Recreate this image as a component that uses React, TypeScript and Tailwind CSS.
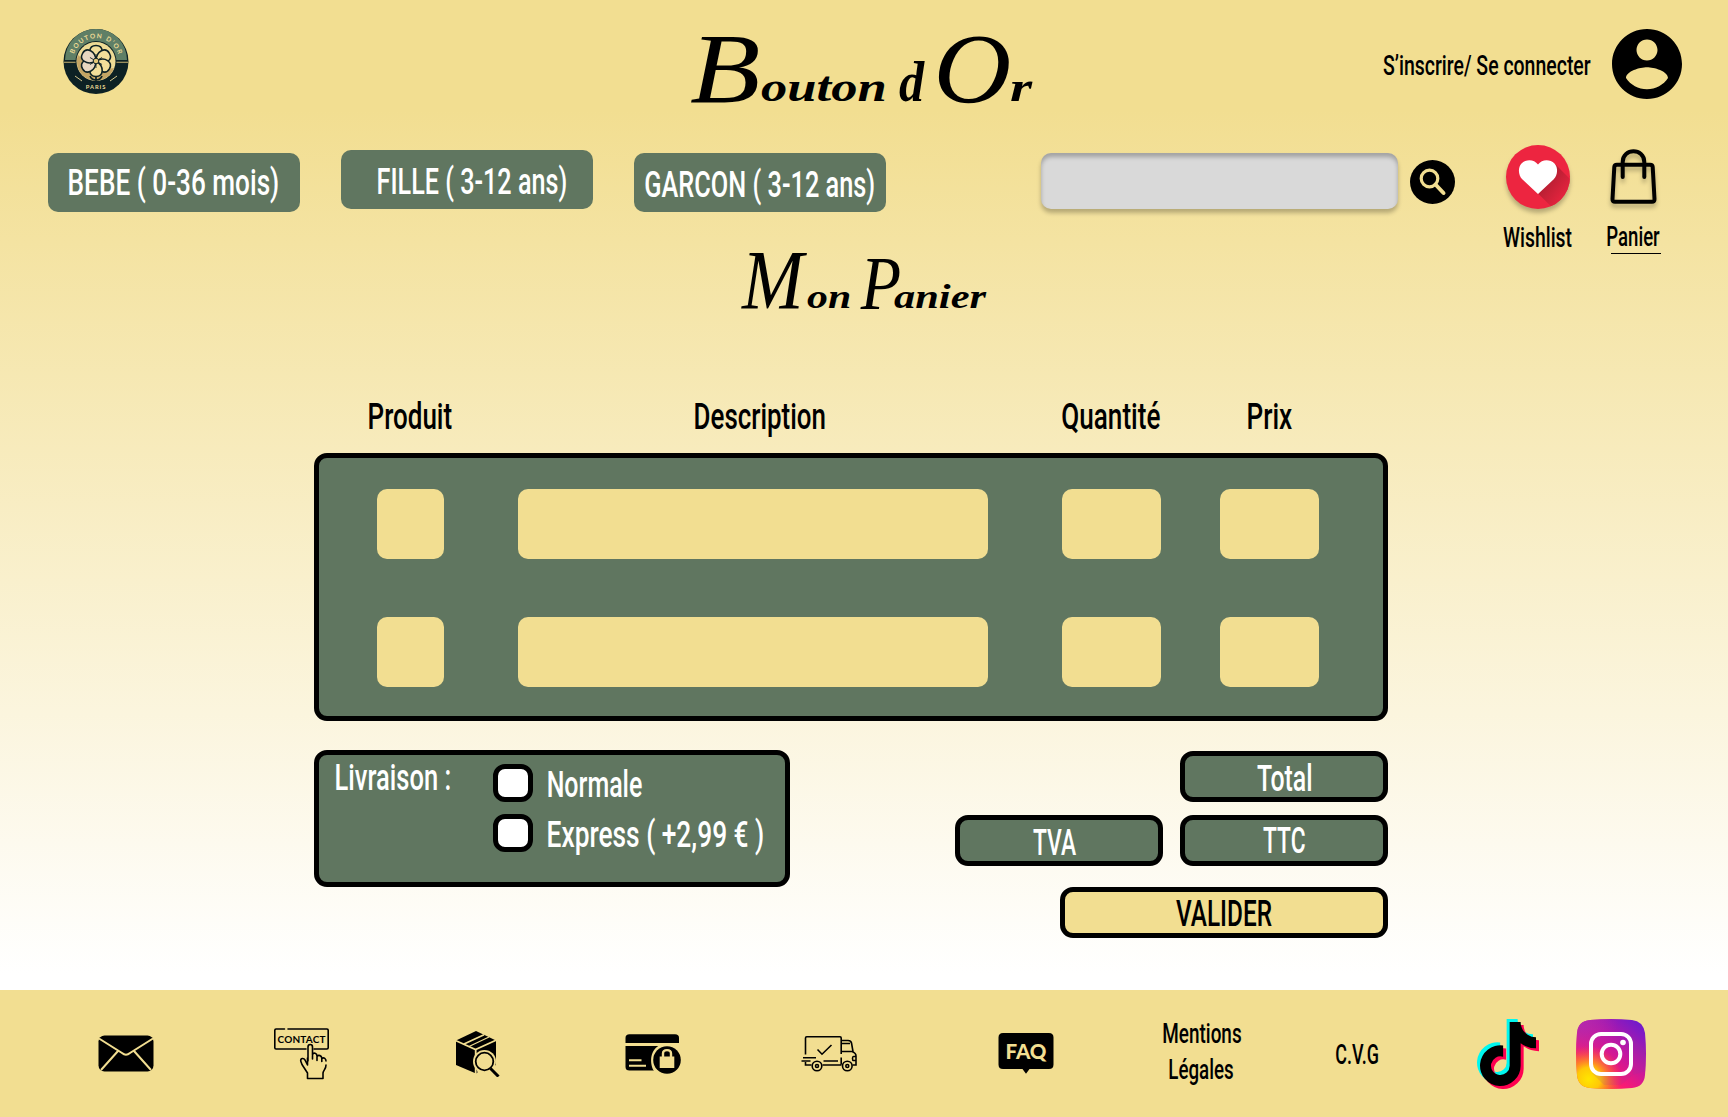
import React from "react";
import { FaTiktok } from "react-icons/fa";

const SANS = 'Roboto, "Liberation Sans", sans-serif';
const SERIF = '"Liberation Serif", serif';

let probe: CanvasRenderingContext2D | null = null;

/** A line of text condensed or stretched so that its ink fills `w` pixels. */
function Fit({
  text,
  w,
  size = 36.5,
  weight = "500",
  family = SANS,
  className = "",
}: {
  text: string;
  w: number;
  size?: number;
  weight?: string;
  family?: string;
  className?: string;
}) {
  probe = probe ?? document.createElement("canvas").getContext("2d")!;
  probe.font = `${weight} ${size}px ${family}`;
  const m = probe.measureText(text);
  const k = w / (m.actualBoundingBoxLeft + m.actualBoundingBoxRight);
  return (
    <span className={`block shrink-0 whitespace-pre ${className}`} style={{ width: w, height: size }}>
      <span
        className="block w-max origin-left"
        style={{
          font: `${weight} ${size}px/1 ${family}`,
          transform: `scaleX(${k}) translate(${m.actualBoundingBoxLeft}px, 1px)`,
        }}
      >
        {text}
      </span>
    </span>
  );
}

const SCRIPT = "italic 400";

function Logo() {
  return (
    <svg className="mt-[29px] ml-[63px] h-[65px] w-[66px] shrink-0" viewBox="0 0 66 65">
      <defs>
        <path id="arc" d="M9.700 32.500 A23.300 23.300 0 0 1 56.300 32.500" />
      </defs>
      <circle cx="33" cy="32.500" r="32.500" fill="#0d2124" />
      <path d="M2 31 A31 31 0 0 1 64 31 Z" fill="#5f7f66" />
      <path d="M1 33.200H65" stroke="#c9b270" strokeWidth="1.100" />
      <circle cx="33" cy="32.500" r="20.500" fill="#0d2124" />
      <circle cx="33" cy="32.500" r="19.500" fill="#eedb95" />
      <path d="M15 26 A19 19 0 0 0 51 39 L33 42 Z" fill="#c4a564" />
      <path d="M33 43V53M33 51c-3 0-5-1.500-6-4M33 51c3 0 5-1.500 6-4" stroke="#0d2124" strokeWidth="1.700" fill="none" />
      <g stroke="#0d2124" strokeWidth="1.500">
        {[0, 60, 120, 180, 240, 300].map((a) => (
          <path key={a} d="M33 32C24 26.500 25.500 16.500 33 16.500S42 26.500 33 32Z" transform={`rotate(${a} 33 32)`} fill={a === 240 || a === 300 ? "#e8d8c0" : "#f2df9a"} />
        ))}
      </g>
      <g stroke="#0d2124" strokeWidth="0.800">
        {[0, 60, 120, 180, 240, 300].map((a) => (
          <path key={a} d="M33 32V25" transform={`rotate(${a} 33 32)`} />
        ))}
      </g>
      <circle cx="33" cy="32" r="2.800" fill="#e3c777" stroke="#0d2124" strokeWidth="1" />
      <path d="M12 47l7 5M54 47l-7 5" stroke="#d8c88c" strokeWidth="1" />
      <text fontSize="6.500" fontWeight="700" fill="#eedb95" fontFamily="Lato, sans-serif">
        <textPath href="#arc" startOffset="7.500" textLength="58">BOUTON D’OR</textPath>
      </text>
      <text x="33" y="59.500" textAnchor="middle" fontSize="5.800" fontWeight="700" letterSpacing="0.900" fill="#eedb95" fontFamily="Lato, sans-serif">
        PARIS
      </text>
    </svg>
  );
}

function UserIcon() {
  return (
    <svg className="mt-[29px] ml-[21px] size-[70px] shrink-0" viewBox="2 2 20 20">
      <path d="M12 2C6.480 2 2 6.480 2 12s4.480 10 10 10 10-4.480 10-10S17.520 2 12 2zm0 3c1.660 0 3 1.340 3 3s-1.340 3-3 3-3-1.340-3-3 1.340-3 3-3zm0 14.200c-2.500 0-4.710-1.280-6-3.220.03-1.990 4-3.080 6-3.080 1.990 0 5.970 1.090 6 3.080-1.290 1.940-3.500 3.220-6 3.220z" />
    </svg>
  );
}

function SearchIcon() {
  return (
    <svg className="mt-[30px] ml-[12px] h-[44px] w-[45px] shrink-0" viewBox="0 0 45 44">
      <ellipse cx="22.500" cy="22" rx="22.500" ry="22" />
      <circle cx="19.500" cy="18.500" r="8.300" fill="none" stroke="#f2de91" strokeWidth="3.200" />
      <path d="M25.500 24.500l8 8.500" stroke="#f2de91" strokeWidth="4" strokeLinecap="round" />
    </svg>
  );
}

function HeartIcon() {
  return (
    <svg className="size-[64px] overflow-visible rounded-full drop-shadow-[0_4px_2px_rgba(0,0,0,0.25)]" viewBox="0 0 64 64">
      <defs>
        <clipPath id="disc">
          <circle cx="32" cy="32" r="32" />
        </clipPath>
        <linearGradient id="longShade" x1="0" y1="0" x2="1" y2="1">
          <stop offset="0.250" stopColor="#b81f33" />
          <stop offset="0.620" stopColor="#ed2540" />
        </linearGradient>
      </defs>
      <circle cx="32" cy="32" r="32" fill="#ed2540" />
      <path clipPath="url(#disc)" d="M49 19L78 48 62 78 32 48.500Z" fill="url(#longShade)" />
      <path d="M32 49L16.500 34.500C12 30 11.800 22.500 15.500 18.500 20 14 28 14 32 19.500 36 14 44 14 48.500 18.500 52.200 22.500 52 30 47.500 34.500Z" fill="#fff" />
    </svg>
  );
}

function BagIcon() {
  return (
    <svg className="h-[55px] w-[47px] overflow-visible drop-shadow-[0_4px_2px_rgba(0,0,0,0.25)]" viewBox="0 0 47 55" fill="none" stroke="#000" strokeWidth="4">
      <path d="M6.800 15.800H40.200Q42.500 15.800 42.700 18L44.500 50Q44.600 52.800 42 52.800H5Q2.400 52.800 2.500 50L4.300 18Q4.500 15.800 6.800 15.800Z" />
      <path d="M12.700 28V13C12.700 -1.200 34.300 -1.200 34.300 13V28" strokeLinecap="round" />
    </svg>
  );
}

function Envelope() {
  return (
    <svg className="mt-[45px] ml-[98px] h-[37px] w-[56px] shrink-0" viewBox="0 0 56 36">
      <rect x="0.500" width="55" height="36" rx="6" />
      <path d="M1 3L24 17.500Q28 21 32 17.500L55 3M20 15.500L3 34.500M36 15.500L53 34.500" stroke="#f2de91" strokeWidth="2" fill="none" />
    </svg>
  );
}

function ContactIcon() {
  return (
    <svg className="mt-[38px] ml-[120px] h-[52px] w-[55px] shrink-0" viewBox="0 0 55 52" fill="none" stroke="#000" strokeWidth="1.600" strokeLinecap="round" strokeLinejoin="round">
      <path d="M10.500 1H2Q0.800 1 0.800 2.200V19.800Q0.800 21 2 21H32M40 21H53Q54.200 21 54.200 19.800V2.200Q54.200 1 53 1H14" />
      <path d="M34 33V19C34 15.700 38.500 15.700 38.500 19V31M38.500 26.500C39.500 24.300 43 24.800 43 28V32.500M43 28.500C44.500 26.500 47.800 27.500 47.800 30.500V33.500M47.800 30.500C50 28.800 52 30.800 52 33M52 37C52 41 49.500 42 49 45V50.500H33.500V45L28 36.500 26.700 33C26.500 30 29.700 29.800 31 32L33.500 37V30" />
      <text x="3.500" y="14.500" textLength="48" lengthAdjust="spacing" fontFamily="Lato, sans-serif" fontWeight="700" fontSize="10" fill="#000" stroke="none">
        CONTACT
      </text>
    </svg>
  );
}

function ParcelIcon() {
  return (
    <svg className="mt-[41px] ml-[126px] h-[46px] w-[46px] shrink-0" viewBox="0 0 46 46">
      <path d="M1 9.500L21 0L41 9.500V34L21 42.500L1 34Z" />
      <path d="M0.500 9.500L20.500 18.500L41.500 9M20.700 18V43M9 13L29 3.800" stroke="#f2de91" strokeWidth="1.800" fill="none" />
      <path d="M14 15.500L34 6" stroke="#f2de91" strokeWidth="1.200" />
      <circle cx="29.500" cy="30.500" r="11.500" fill="#f2de91" />
      <path d="M22 38h3l8 8h-10z" fill="#f2de91" />
      <circle cx="29.500" cy="30.500" r="8.800" fill="#f2de91" stroke="#000" strokeWidth="1.800" />
      <path d="M35.500 37.500L43.500 45.500" stroke="#000" strokeWidth="3" />
    </svg>
  );
}

function CardLockIcon() {
  return (
    <svg className="mt-[44px] ml-[124px] h-[40px] w-[56px] shrink-0" viewBox="0 0 56 40">
      <path d="M0.500 9V4Q0.500 0.300 4.500 0.300H50Q54 0.300 54 4V9Z" />
      <path d="M0.500 12H54V36.500H4.500Q0.500 36.500 0.500 33Z" />
      <path d="M4 26.300H16.500M4 31.800H21" stroke="#f2de91" strokeWidth="2" />
      <path d="M56 11.500H34C24 17 25 31 29 37V40H56Z" fill="#f2de91" />
      <ellipse cx="42" cy="26" rx="13.800" ry="13.800" />
      <path d="M34.700 22.500h14.600v11.500h-14.600z" fill="#f2de91" />
      <path d="M38 24V19.500C38 15 46 15 46 19.500V24" fill="none" stroke="#f2de91" strokeWidth="2.400" />
    </svg>
  );
}

function TruckIcon() {
  return (
    <svg className="mt-[46px] ml-[120px] h-[36px] w-[56px] shrink-0" viewBox="0 0 56 36" fill="none" stroke="#000" strokeWidth="1.600">
      <path d="M4.500 18.500V2Q4.500 0.800 5.700 0.800H39Q40.200 0.800 40.200 2V18M40.200 21.500V28.500M40.200 4.500H47Q50 4.500 50.500 7L52 15.500H41M40.200 7.500H49M51 15.500Q55 17 55 20V29H51.500M55 20.500H52.500Q51.500 20.500 51.500 22.500T52.500 24.500H55M2 21.800H15M0.500 25H9.500M4.500 26V29H10.500M21.500 29H40.500M22.500 25H37M16.500 13.500L21 18.200L30.500 9" />
      <circle cx="16" cy="30" r="4.800" />
      <circle cx="16" cy="30" r="1.500" />
      <circle cx="46.300" cy="30" r="4.800" />
      <circle cx="46.300" cy="30" r="1.500" />
    </svg>
  );
}

function FaqIcon() {
  return (
    <svg className="mt-[43px] ml-[141px] h-[41px] w-[56px] shrink-0" viewBox="0 0 56 41">
      <path d="M5 0H51Q55.500 0 55.500 4.500V31.500Q55.500 36 51 36H31.500L28 40.700L24.500 36H5Q0.500 36 0.500 31.500V4.500Q0.500 0 5 0Z" />
      <text x="7.500" y="25.800" textLength="41" lengthAdjust="spacingAndGlyphs" fontFamily="Lato, sans-serif" fontWeight="900" fontSize="20.500" fill="#f2de91">
        FAQ
      </text>
    </svg>
  );
}

function TikTok() {
  return (
    <div className="relative mt-[29px] ml-[99px] h-[70px] w-[62px] shrink-0">
      <FaTiktok className="absolute top-0 left-0 h-[64px] w-[56px] text-[#00f7ef]" />
      <FaTiktok className="absolute top-[6px] left-[6px] h-[64px] w-[56px] text-[#ff0050]" />
      <FaTiktok className="absolute top-[3px] left-[3px] h-[64px] w-[56px] text-black" />
    </div>
  );
}

const TILE = "M14 1Q35 -1 56 1Q67 2 69 14Q71 35 69 56Q68 68 56 69Q35 71 14 69Q2 68 1 56Q-1 35 1 14Q2 2 14 1Z";

function Instagram() {
  return (
    <svg className="mt-[29px] ml-[37px] size-[70px] shrink-0" viewBox="0 0 70 70">
      <defs>
        <linearGradient id="igBase" x1="0.100" y1="1" x2="0.900" y2="0">
          <stop offset="0" stopColor="#ff6a1c" />
          <stop offset="0.300" stopColor="#fb1a72" />
          <stop offset="0.600" stopColor="#c218a0" />
          <stop offset="1" stopColor="#6a1bcf" />
        </linearGradient>
        <radialGradient id="igSun" cx="0.180" cy="0.860" r="0.480">
          <stop offset="0" stopColor="#ffe600" />
          <stop offset="0.350" stopColor="#ffc807" />
          <stop offset="1" stopColor="#ff5a2a" stopOpacity="0" />
        </radialGradient>
        <radialGradient id="igViolet" cx="0" cy="0" r="0.600">
          <stop offset="0" stopColor="#b02bb0" />
          <stop offset="1" stopColor="#b02bb0" stopOpacity="0" />
        </radialGradient>
      </defs>
      <path d={TILE} fill="url(#igBase)" />
      <path d={TILE} fill="url(#igViolet)" />
      <path d={TILE} fill="url(#igSun)" />
      <path d="M55 16L69.500 31V52L57 56L28 56L16 54L28 66H45L57 56Z" fill="#8a3a9a" opacity="0.150" />
      <rect x="15" y="15" width="40" height="40" rx="10" fill="none" stroke="#fff" strokeWidth="4" />
      <circle cx="35" cy="35" r="9.300" fill="none" stroke="#fff" strokeWidth="4" />
      <circle cx="47" cy="23.500" r="2.800" fill="#fff" />
    </svg>
  );
}

function CartRow({ className = "" }: { className?: string }) {
  return (
    <div className={`flex h-[70px] pl-[58px] ${className}`}>
      <div className="w-[67px] rounded-[10px] bg-[#f2de91]" />
      <div className="ml-[74px] w-[470px] rounded-[10px] bg-[#f2de91]" />
      <div className="ml-[74px] w-[99px] rounded-[10px] bg-[#f2de91]" />
      <div className="ml-[59px] w-[99px] rounded-[10px] bg-[#f2de91]" />
    </div>
  );
}

export default function App() {
  return (
    <div className="flex h-[1117px] w-[1728px] flex-col overflow-hidden bg-white text-black">
      <div className="h-[990px] bg-[linear-gradient(180deg,#f2de91_110px,#ffffff_975px)]">
        <header className="flex h-[130px] items-start">
          <Logo />
          <h1 className="ml-[561px] flex w-[343px] shrink-0 items-start">
            <Fit text="B" w={68} size={100} weight={SCRIPT} family={SERIF} className="mt-[18px]" />
            <Fit text="outon" w={124} size={42} weight="italic 700" family={SERIF} className="mt-[65px] ml-[3px]" />{" "}
            <Fit text="d" w={26} size={56} weight="italic 700" family={SERIF} className="mt-[53px] ml-[14px]" />{" "}
            <Fit text="O" w={70} size={100} weight={SCRIPT} family={SERIF} className="mt-[18px] ml-[14px]" />
            <Fit text="r" w={23} size={42} weight="italic 700" family={SERIF} className="mt-[65px] ml-[1px]" />
          </h1>
          <Fit text="S’inscrire/ Se connecter" w={208} size={27} className="mt-[52px] ml-[350px]" />
          <UserIcon />
        </header>

        <nav className="flex h-[120px] items-start">
          <div className="mt-[23px] ml-[48px] flex h-[59px] w-[252px] shrink-0 rounded-[10px] bg-[#607660] pl-[21px] text-white">
            <Fit text="BEBE ( 0-36 mois)" w={209} className="mt-[11px]" />
          </div>
          <div className="mt-[20px] ml-[41px] flex h-[59px] w-[252px] shrink-0 rounded-[10px] bg-[#607660] pl-[37px] text-white">
            <Fit text="FILLE ( 3-12 ans)" w={188} className="mt-[13px]" />
          </div>
          <div className="mt-[23px] ml-[41px] flex h-[59px] w-[252px] shrink-0 rounded-[10px] bg-[#607660] pl-[11px] text-white">
            <Fit text="GARCON ( 3-12 ans)" w={229} className="mt-[13px]" />
          </div>
          <input
            aria-label="Rechercher"
            className="mt-[23px] ml-[155px] h-[56px] w-[357px] shrink-0 rounded-[10px] bg-[#d9d9d9] shadow-[0_4px_4px_rgba(0,0,0,0.25),inset_0_4px_4px_rgba(0,0,0,0.25)]"
          />
          <SearchIcon />
          <a className="mt-[15px] ml-[48px] flex w-[69px] shrink-0 flex-col items-center">
            <HeartIcon />
            <Fit text="Wishlist" w={69} size={27} className="mt-[15px]" />
          </a>
          <a className="mt-[19px] ml-[35px] flex w-[54px] shrink-0 flex-col">
            <span className="ml-[3px]">
              <BagIcon />
            </span>
            <Fit text="Panier" w={53} size={27} className="mt-[19px]" />
            <span className="mt-[3px] ml-[4px] h-px w-[50px] bg-black" />
          </a>
        </nav>

        <h2 className="flex h-[140px] items-start pl-[741px]">
          <Fit text="M" w={66} size={84} weight={SCRIPT} family={SERIF} className="-mt-[12px]" />
          <Fit text="on" w={43} size={34} weight="italic 700" family={SERIF} className="mt-[29px]" />{" "}
          <Fit text="P" w={40} size={76} weight={SCRIPT} family={SERIF} className="-mt-[6px] ml-[10px]" />
          <Fit text="anier" w={93} size={34} weight="italic 700" family={SERIF} className="mt-[29px] -ml-[6px]" />
        </h2>

        <main className="flex flex-col pl-[314px]">
          <div className="flex h-[63px] items-start pt-[8px]">
            <Fit text="Produit" w={83} className="ml-[55px]" />
            <Fit text="Description" w={130} className="ml-[243px]" />
            <Fit text="Quantité" w={98} className="ml-[237px]" />
            <Fit text="Prix" w={44} className="ml-[88px]" />
          </div>
          <section className="h-[268px] w-[1074px] rounded-[13px] border-[5px] border-black bg-[#607660] pt-[31px]">
            <CartRow />
            <CartRow className="mt-[58px]" />
          </section>

          <div className="mt-[29px] flex w-[1074px] items-start justify-between">
            <section className="flex h-[137px] w-[476px] items-start rounded-[13px] border-[5px] border-black bg-[#607660] text-white">
              <Fit text="Livraison :" w={114} className="mt-[4px] ml-[17px]" />
              <div className="ml-[43px] flex flex-col pt-[9px]">
                <label className="flex items-start">
                  <span className="h-[38px] w-[40px] rounded-[12px] border-[5px] border-black bg-white" />
                  <Fit text="Normale" w={94} className="mt-[2px] ml-[15px]" />
                </label>
                <label className="mt-[11px] flex items-start">
                  <span className="h-[38px] w-[40px] rounded-[12px] border-[5px] border-black bg-white" />
                  <Fit text="Express ( +2,99 € )" w={215} className="mt-[2px] ml-[15px]" />
                </label>
              </div>
            </section>

            <section className="flex flex-col items-end pt-px text-white">
              <div className="flex h-[51px] w-[208px] rounded-[13px] border-[5px] border-black bg-[#607660] pl-[72px]">
                <Fit text="Total" w={54} className="mt-[4px]" />
              </div>
              <div className="mt-[13px] flex gap-[17px]">
                <div className="flex h-[51px] w-[208px] rounded-[13px] border-[5px] border-black bg-[#607660] pl-[73px]">
                  <Fit text="TVA" w={43} className="mt-[4px]" />
                </div>
                <div className="flex h-[51px] w-[208px] rounded-[13px] border-[5px] border-black bg-[#607660] pl-[78px]">
                  <Fit text="TTC" w={42} className="mt-[2px]" />
                </div>
              </div>
              <button className="mt-[21px] flex h-[51px] w-[328px] rounded-[13px] border-[5px] border-black bg-[#f2de91] pl-[111px] text-left text-black">
                <Fit text="VALIDER" w={96} className="mt-[3px]" />
              </button>
            </section>
          </div>
        </main>
      </div>

      <footer className="flex h-[127px] items-start bg-[#f2de91]">
        <Envelope />
        <ContactIcon />
        <ParcelIcon />
        <CardLockIcon />
        <TruckIcon />
        <FaqIcon />
        <a className="mt-[30px] ml-[109px] flex w-[78px] shrink-0 flex-col items-center gap-[9px]">
          <Fit text="Mentions" w={78} size={27} />
          <Fit text="Légales" w={64} size={27} className="-ml-[3px]" />
        </a>
        <Fit text="C.V.G" w={42} size={27} className="mt-[51px] ml-[95px]" />
        <TikTok />
        <Instagram />
      </footer>
    </div>
  );
}
